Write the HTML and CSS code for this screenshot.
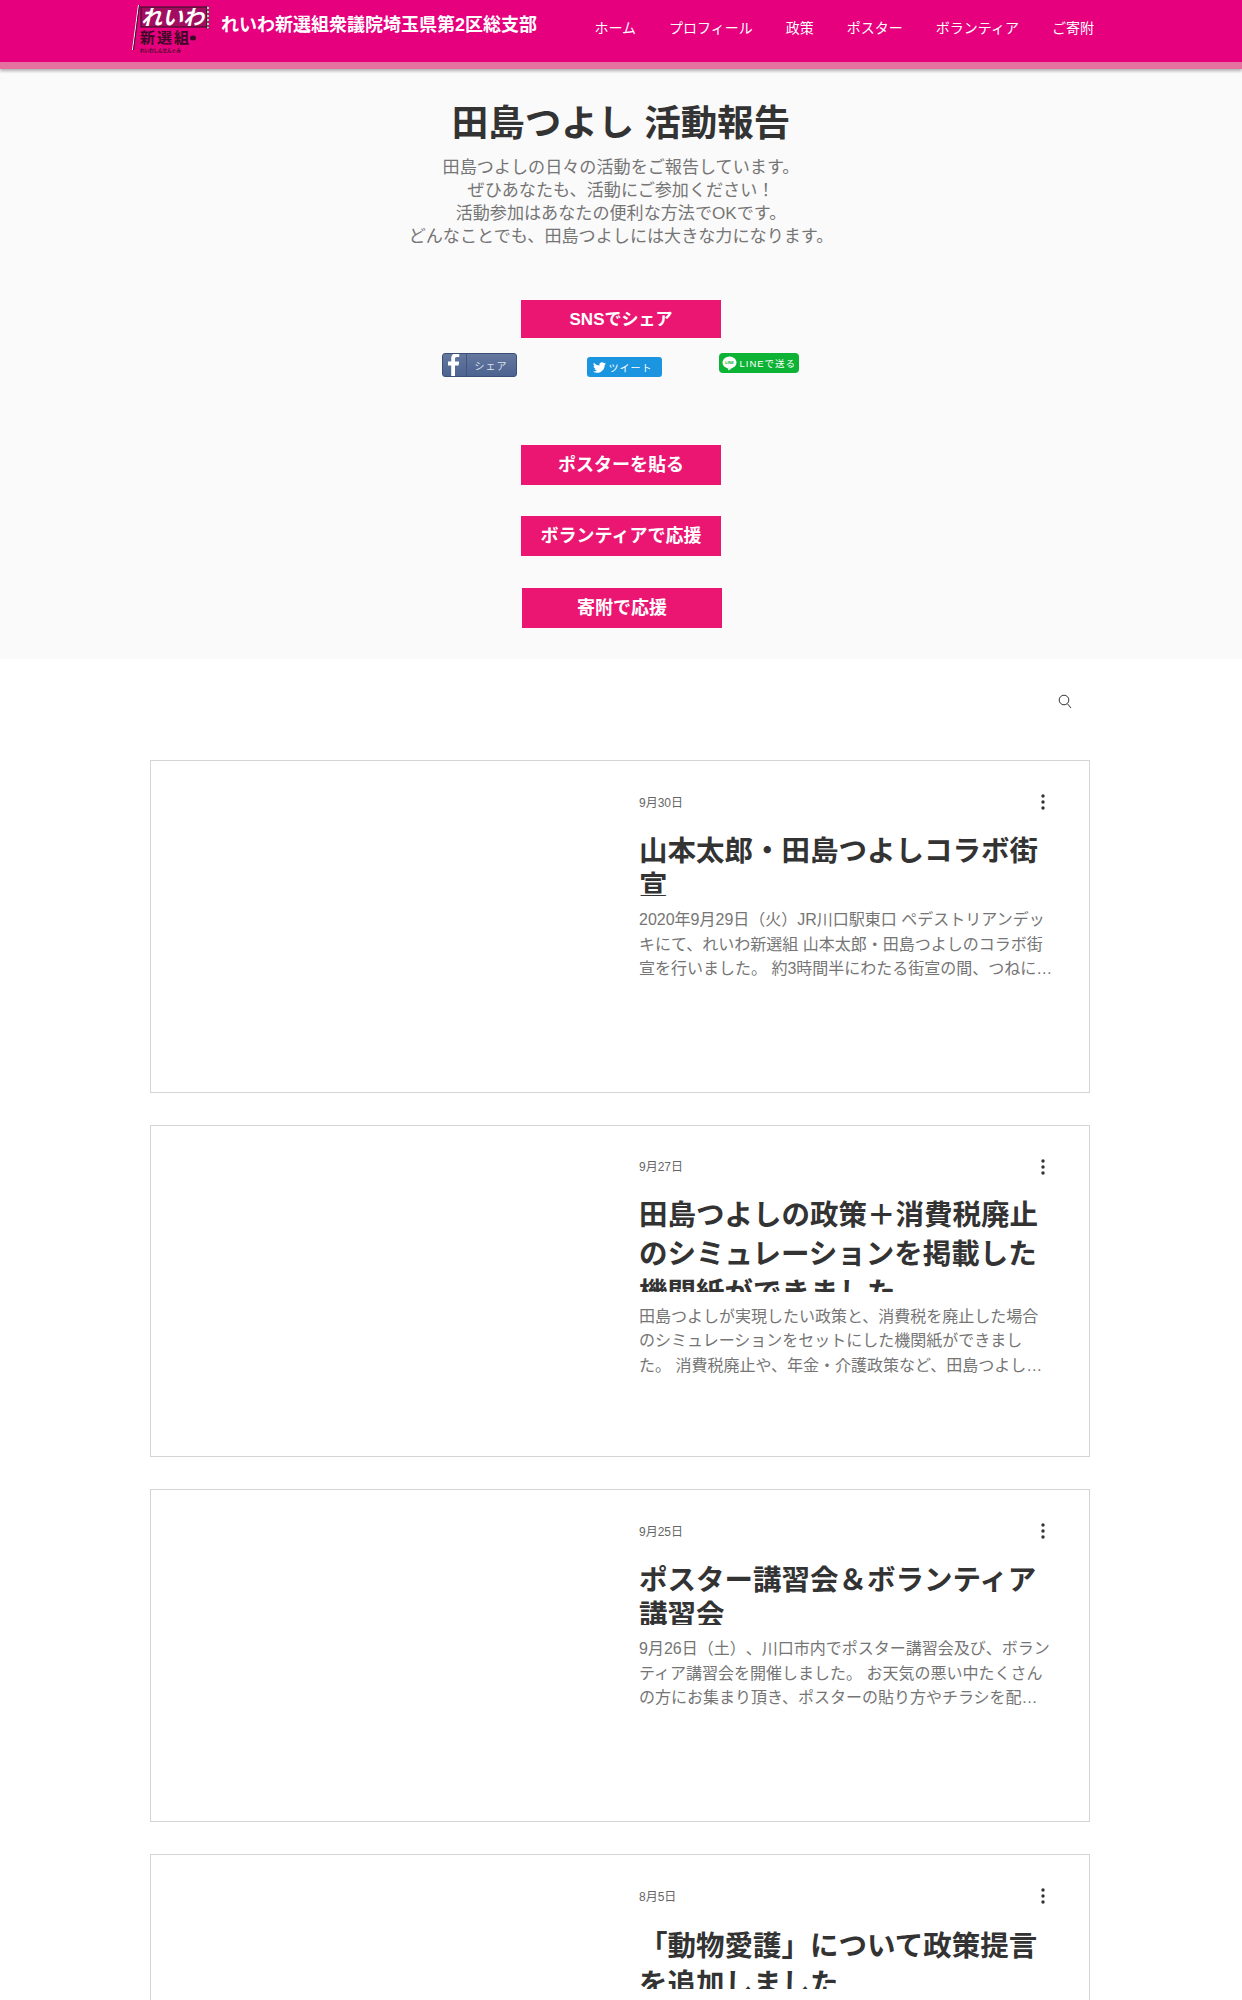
FILE: index.html
```html
<!DOCTYPE html>
<html lang="ja">
<head>
    <meta charset="UTF-8">
    <meta name="viewport" content="width=device-width, initial-scale=1.0">
    <title>田島つよし 活動報告</title>
    <link rel="stylesheet" href="styles.css">
</head>
<body>

<!-- Header -->
<header class="site-header">
    <a href="#" class="brand">
        <svg class="logo" viewBox="0 0 78 48" width="78" height="48">
            <line x1="6.500" y1="0" x2="0.500" y2="45" stroke="#fff" stroke-width="1"/>
            <line x1="7.500" y1="0" x2="1.500" y2="45" stroke="#222" stroke-width="1"/>
            <rect x="9" y="2" width="66" height="20" fill="#a30d5f" stroke="#2a1020" stroke-width="1"/>
            <path d="M75 1 l3 2 -3 2 3 2 -3 2 3 2 -3 2 3 2 -3 2 3 2 -3 2 3 2 -3 1z" fill="#fff" stroke="#222" stroke-width="0.500"/>
            <text x="9" y="20" class="logo-main">れいわ</text>
            <text x="8" y="38" class="logo-sub">新選組</text>
            <path d="M58 33 a3 2.500 0 1 1 6 0 a3 2.500 0 1 1 -6 0z" fill="#3a0a24"/>
            <text x="8" y="47" class="logo-tiny">れいわしんせんぐみ</text>
        </svg>
        <span class="brand-name">れいわ新選組衆議院埼玉県第2区総支部</span>
    </a>
    <nav class="main-nav">
        <a href="#">ホーム</a>
        <a href="#">プロフィール</a>
        <a href="#">政策</a>
        <a href="#">ポスター</a>
        <a href="#">ボランティア</a>
        <a href="#">ご寄附</a>
    </nav>
</header>

<!-- Hero -->
<section class="hero">
    <h1 class="hero-title">田島つよし 活動報告</h1>
    <p class="hero-text">田島つよしの日々の活動をご報告しています。<br>ぜひあなたも、活動にご参加ください！<br>活動参加はあなたの便利な方法でOKです。<br>どんなことでも、田島つよしには大きな力になります。</p>

    <a href="#" class="btn btn-share">SNSでシェア</a>

    <div class="share-row">
        <a href="#" class="share share-fb">
            <span class="fb-icon">
                <svg viewBox="0 0 20 24" width="20" height="24"><path d="M11 24V13.500h3.600l.5-4H11V7c0-1.200.4-2 2-2h2.200V1.400C14.800 1.300 13.600 1.200 12.300 1.200 9.300 1.200 7.200 3 7.200 6.500v3H4v4h3.200V24z" fill="#fff"/></svg>
            </span>
            <span class="fb-label">シェア</span>
        </a>
        <a href="#" class="share share-tw">
            <svg viewBox="0 0 24 24" width="13" height="13"><path d="M23.953 4.57a10 10 0 01-2.825.775 4.958 4.958 0 002.163-2.723c-.951.555-2.005.959-3.127 1.184a4.92 4.92 0 00-8.384 4.482C7.69 8.095 4.067 6.13 1.64 3.162a4.822 4.822 0 00-.666 2.475c0 1.71.87 3.213 2.188 4.096a4.904 4.904 0 01-2.228-.616v.06a4.923 4.923 0 003.946 4.827 4.996 4.996 0 01-2.212.085 4.936 4.936 0 004.604 3.417 9.867 9.867 0 01-6.102 2.105c-.39 0-.779-.023-1.17-.067a13.995 13.995 0 007.557 2.209c9.053 0 13.998-7.496 13.998-13.985 0-.21 0-.42-.015-.63A9.935 9.935 0 0024 4.59z" fill="#fff"/></svg>
            <span>ツイート</span>
        </a>
        <a href="#" class="share share-line">
            <svg viewBox="0 0 16 16" width="15" height="15">
                <ellipse cx="8" cy="7" rx="7.500" ry="6.500" fill="#fff"/>
                <path d="M6 13 L7 15.500 L10.500 13z" fill="#fff"/>
                <text x="8" y="8.800" class="line-mark">LINE</text>
            </svg>
            <span>LINEで送る</span>
        </a>
    </div>

    <a href="#" class="btn btn-poster">ポスターを貼る</a>
    <a href="#" class="btn btn-volunteer">ボランティアで応援</a>
    <a href="#" class="btn btn-donate">寄附で応援</a>
</section>

<!-- Blog -->
<main class="blog">
    <div class="blog-tools">
        <svg class="search-icon" viewBox="0 0 14 15" width="14" height="15">
            <circle cx="6" cy="6" r="4.800" fill="none" stroke="#333" stroke-width="1"/>
            <line x1="9.500" y1="9.800" x2="13" y2="14" stroke="#333" stroke-width="1"/>
        </svg>
    </div>

    <div class="post-list">
        <article class="post">
            <div class="post-body">
                <div class="post-meta">
                    <span class="post-date">9月30日</span>
                    <svg class="more-icon" viewBox="0 0 4 18" width="4" height="18"><circle cx="2" cy="3" r="1.700"/><circle cx="2" cy="9" r="1.700"/><circle cx="2" cy="15" r="1.700"/></svg>
                </div>
                <h2 class="post-title">山本太郎・田島つよしコラボ街宣</h2>
                <p class="post-excerpt">2020年9月29日（火）JR川口駅東口 ペデストリアンデッキにて、れいわ新選組 山本太郎・田島つよしのコラボ街宣を行いました。 約3時間半にわたる街宣の間、つねに多くの方が足を止めてくださいました。</p>
            </div>
        </article>

        <article class="post">
            <div class="post-body">
                <div class="post-meta">
                    <span class="post-date">9月27日</span>
                    <svg class="more-icon" viewBox="0 0 4 18" width="4" height="18"><circle cx="2" cy="3" r="1.700"/><circle cx="2" cy="9" r="1.700"/><circle cx="2" cy="15" r="1.700"/></svg>
                </div>
                <h2 class="post-title post-title-tall">田島つよしの政策＋消費税廃止のシミュレーションを掲載した機関紙ができました</h2>
                <p class="post-excerpt post-excerpt-tall">田島つよしが実現したい政策と、消費税を廃止した場合のシミュレーションをセットにした機関紙ができました。 消費税廃止や、年金・介護政策など、田島つよしが目指す社会をまとめています。</p>
            </div>
        </article>

        <article class="post">
            <div class="post-body">
                <div class="post-meta">
                    <span class="post-date">9月25日</span>
                    <svg class="more-icon" viewBox="0 0 4 18" width="4" height="18"><circle cx="2" cy="3" r="1.700"/><circle cx="2" cy="9" r="1.700"/><circle cx="2" cy="15" r="1.700"/></svg>
                </div>
                <h2 class="post-title">ポスター講習会＆ボランティア講習会</h2>
                <p class="post-excerpt">9月26日（土）、川口市内でポスター講習会及び、ボランティア講習会を開催しました。 お天気の悪い中たくさんの方にお集まり頂き、ポスターの貼り方やチラシを配る際の注意点などを学びました。</p>
            </div>
        </article>

        <article class="post">
            <div class="post-body">
                <div class="post-meta">
                    <span class="post-date">8月5日</span>
                    <svg class="more-icon" viewBox="0 0 4 18" width="4" height="18"><circle cx="2" cy="3" r="1.700"/><circle cx="2" cy="9" r="1.700"/><circle cx="2" cy="15" r="1.700"/></svg>
                </div>
                <h2 class="post-title post-title-wide">「動物愛護」について政策提言を追加しました</h2>
            </div>
        </article>
    </div>
</main>

</body>
</html>
```

FILE: styles.css
```css
/* General styling */
html, body {
    height: 2000px;
    overflow: hidden;
}

body {
    margin: 0;
    background-color: #ffffff;
    color: #333;
    font-family: "Liberation Sans", "Noto Sans CJK JP", sans-serif;
    text-spacing-trim: space-all;
}

a {
    color: inherit;
    text-decoration: none;
}

/* Header */
.site-header {
    position: relative;
    z-index: 1;
    display: flex;
    align-items: flex-start;
    height: 62px;
    padding: 0 148px 0 132px;
    background-color: #e6007e;
    border-bottom: 7px solid #e5719f;
    box-shadow: 0 2px 3px rgba(0, 0, 0, 0.3);
    color: #ffffff;
}

.brand {
    display: flex;
    align-items: flex-start;
    gap: 11px;
    padding-top: 5px;
}

.logo {
    display: block;
    flex: none;
}

.logo-main {
    font-size: 21px;
    font-weight: 700;
    font-style: italic;
    fill: #ffffff;
}

.logo-sub {
    font-size: 15px;
    font-weight: 700;
    letter-spacing: 2px;
    fill: #3a0a24;
}

.logo-tiny {
    font-size: 4.500px;
    font-weight: 700;
    fill: #3a0a24;
}

.brand-name {
    font-size: 18px;
    font-weight: 700;
    line-height: 40px;
}

.main-nav {
    display: flex;
    gap: 33px;
    margin-left: auto;
    font-size: 14px;
    line-height: 56px;
}

/* Hero */
.hero {
    display: flex;
    flex-direction: column;
    align-items: center;
    padding: 29px 0 31px;
    background-color: #fafafa;
}

.hero-title {
    margin: 0 0 6px;
    font-size: 36.500px;
    font-weight: 700;
    line-height: 52px;
    color: #333;
}

.hero-text {
    margin: 0 0 52px;
    font-size: 17.100px;
    line-height: 23px;
    text-align: center;
    color: #757575;
}

.btn {
    display: flex;
    align-items: center;
    justify-content: center;
    box-sizing: border-box;
    width: 200px;
    height: 40px;
    padding-bottom: 4px;
    background-color: #ea1672;
    color: #ffffff;
    font-size: 18px;
    font-weight: 700;
}

.btn-share {
    height: 38px;
    font-size: 17px;
}

.btn-volunteer {
    margin-top: 31px;
}

.btn-donate {
    margin-top: 32px;
    margin-left: 2px;
}

/* Share buttons */
.share-row {
    display: flex;
    align-items: flex-start;
    height: 24px;
    margin: 15px 2px 68px 0;
}

.share {
    display: flex;
    align-items: center;
    box-sizing: border-box;
    color: #ffffff;
    font-size: 10px;
    white-space: nowrap;
}

.share-fb {
    width: 75px;
    height: 24px;
    border: 1px solid #3b4f78;
    border-radius: 3px;
    background: linear-gradient(#64789f, #4c6290);
    color: #dfe4ee;
}

.fb-icon {
    display: flex;
    align-items: flex-end;
    justify-content: center;
    width: 23px;
    height: 22px;
    overflow: hidden;
    border-right: 1px solid #41557e;
}

.fb-label {
    margin-left: 8px;
    letter-spacing: 1px;
}

.share-tw {
    gap: 3px;
    width: 75px;
    height: 20px;
    margin-top: 4px;
    margin-left: 70px;
    padding-left: 6px;
    border-radius: 3px;
    background-color: #1b95e0;
    letter-spacing: 1px;
}

.share-line {
    gap: 3px;
    width: 80px;
    height: 20px;
    margin-left: 57px;
    padding-left: 3px;
    border-radius: 4px;
    background-color: #0db335;
    font-size: 9.500px;
    letter-spacing: 1px;
}

.line-mark {
    font-size: 4px;
    font-weight: 700;
    letter-spacing: 0;
    text-anchor: middle;
    fill: #0db335;
}

/* Blog list */
.blog {
    padding: 0 152px 0 150px;
}

.blog-tools {
    display: flex;
    justify-content: flex-end;
    height: 101px;
    padding-top: 35px;
    box-sizing: border-box;
    padding-right: 18px;
}

.post-list {
    display: flex;
    flex-direction: column;
    gap: 32px;
}

.post {
    box-sizing: border-box;
    height: 332.700px;
    border: 1px solid #d5d5d5;
}

.post-body {
    box-sizing: border-box;
    width: 416px;
    margin-left: 488px;
    padding-top: 31px;
}

.post-meta {
    display: flex;
    align-items: center;
    justify-content: space-between;
    height: 18px;
    padding-right: 10px;
}

.post-date {
    font-size: 12px;
    color: #666;
}

.more-icon {
    fill: #333;
    margin-top: 2px;
}

.post-title {
    max-height: 62px;
    margin: 24px 0 0;
    overflow: hidden;
    font-size: 28.500px;
    font-weight: 700;
    line-height: 35px;
    color: #333;
}

.post-title-tall {
    max-height: 95.500px;
    margin-top: 21.500px;
    line-height: 39px;
}

.post-title-wide {
    line-height: 38px;
    margin-top: 22.500px;
}

.post-excerpt {
    display: -webkit-box;
    width: 414px;
    margin: 12px 0 0;
    overflow: hidden;
    font-size: 16px;
    line-height: 24.500px;
    color: #757575;
    -webkit-box-orient: vertical;
    -webkit-line-clamp: 3;
}

.post-excerpt-tall {
    margin-top: 13px;
}
```
